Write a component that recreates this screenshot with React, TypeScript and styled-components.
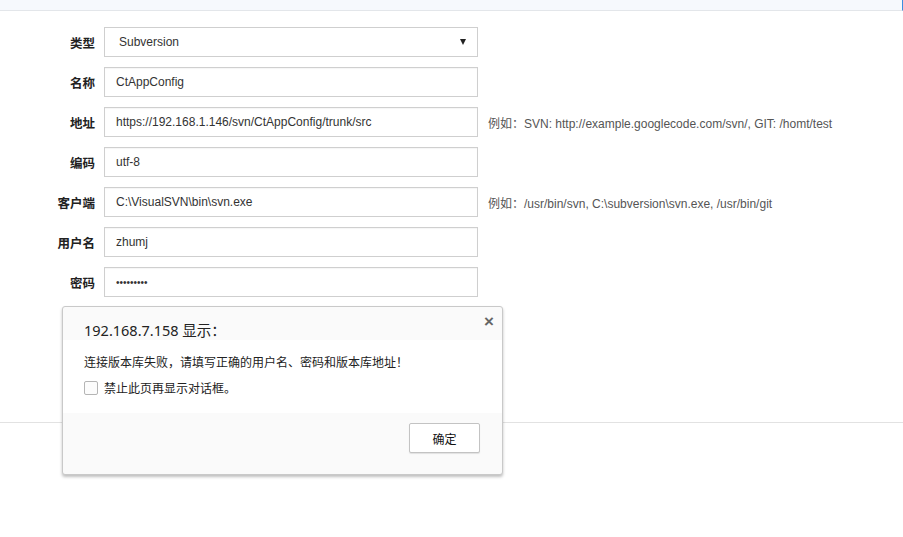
import styled, { createGlobalStyle } from 'styled-components'

const GlobalStyle = createGlobalStyle`
  html, body {
    margin: 0;
    padding: 0;
    background: #fff;
  }
  body {
    font-family: "Liberation Sans", Arial, "Noto Sans CJK SC", sans-serif;
    color: #333;
  }
`;

const Page = styled.div`
  position: relative;
  width: 903px;
  height: 537px;
  overflow: hidden;
`;

const TopBar = styled.div`
  height: 10px;
  background-color: #f6f9fd;
  border-bottom: 1px solid #e3e6ea;
  border-right: 1px solid #3d8ee0;
`;

const Form = styled.div`
  display: flex;
  flex-direction: column;
  gap: 10px;
  padding-top: 16px;
`;

const Row = styled.div`
  display: grid;
  grid-template-columns: 95px 374px auto;
  column-gap: 9px;
  align-items: center;
  height: 30px;
`;

const Label = styled.label`
  text-align: right;
  font-family: "Noto Sans CJK SC", sans-serif;
  font-weight: 700;
  font-size: 12.5px;
  color: #222;
`;

const Input = styled.input<{ $masked?: boolean }>`
  box-sizing: border-box;
  width: 374px;
  height: 30px;
  margin: 0;
  padding: 0 11px;
  border: 1px solid #cfcfcf;
  border-radius: 0;
  box-shadow: inset 0 1px 1px rgba(0, 0, 0, 0.04);
  font-family: "Liberation Sans", Arial, sans-serif;
  font-size: ${(p) => (p.$masked ? '10px' : '12px')};
  color: #333;
  outline: none;
  background: #fff;
`;

const Select = styled.div`
  box-sizing: border-box;
  display: flex;
  align-items: center;
  justify-content: space-between;
  width: 374px;
  height: 30px;
  padding: 0 11px 0 14px;
  border: 1px solid #cfcfcf;
  font-family: "Liberation Sans", Arial, sans-serif;
  font-size: 12px;
  color: #333;
  background: #fff;
`;

const Arrow = styled.span`
  width: 0;
  height: 0;
  border-left: 3px solid transparent;
  border-right: 3px solid transparent;
  border-top: 6px solid #222;
`;

const Hint = styled.span`
  padding-left: 1px;
  font-family: "Liberation Sans", Arial, "Noto Sans CJK SC", sans-serif;
  font-size: 12px;
  color: #555;
  white-space: nowrap;
`;

const HintPrefix = styled.span`
  font-family: "Noto Sans CJK SC", sans-serif;
  font-size: 12px;
`;

const Footer = styled.div`
  margin-top: 125px;
  border-top: 1px solid #e2e2e2;
`;

const Dialog = styled.div`
  position: absolute;
  left: 62px;
  top: 306px;
  width: 441px;
  height: 169px;
  box-sizing: border-box;
  display: flex;
  flex-direction: column;
  border: 1px solid #c9c9c9;
  border-radius: 3px;
  background: #fafafa;
  box-shadow: 0 2px 3px rgba(0, 0, 0, 0.25);
  font-family: "Noto Sans CJK SC", sans-serif;
  overflow: hidden;
`;

const DialogHeader = styled.div`
  position: relative;
  height: 33px;
  padding: 13px 0 0 21px;
  box-sizing: border-box;
  font-family: "Noto Sans", "Noto Sans CJK SC", sans-serif;
  font-size: 14.5px;
  color: #222;
  line-height: 20px;
`;

const CloseButton = styled.span`
  position: absolute;
  right: 8px;
  top: 5px;
  font-family: "Liberation Sans", Arial, sans-serif;
  font-size: 17px;
  font-weight: 700;
  color: #666;
`;

const DialogBody = styled.div`
  display: flex;
  flex-direction: column;
  gap: 9px;
  height: 73px;
  padding: 14px 0 0 21px;
  box-sizing: border-box;
  background: #fff;
`;

const Message = styled.div`
  font-size: 12px;
  color: #222;
  line-height: 16px;
`;

const CheckRow = styled.div`
  display: flex;
  align-items: center;
  gap: 6px;
  font-size: 12px;
  color: #222;
`;

const CheckBox = styled.span`
  width: 12px;
  height: 12px;
  border: 1px solid #b5b5b5;
  border-radius: 2px;
  background: #fcfcfc;
`;

const DialogFooter = styled.div`
  display: flex;
  justify-content: flex-end;
  padding: 10px 22px 0 0;
`;

const OkButton = styled.button`
  box-sizing: border-box;
  width: 71px;
  height: 30px;
  border: 1px solid #c3c3c3;
  border-radius: 2px;
  background: #fff;
  box-shadow: 0 1px 1px rgba(0, 0, 0, 0.1);
  font-family: "Noto Sans CJK SC", sans-serif;
  font-size: 12px;
  color: #111;
`;

const rows = [
  { label: '名称', value: 'CtAppConfig' },
  { label: '地址', value: 'https://192.168.1.146/svn/CtAppConfig/trunk/src', hint: 'SVN: http://example.googlecode.com/svn/, GIT: /homt/test' },
  { label: '编码', value: 'utf-8' },
  { label: '客户端', value: 'C:\\VisualSVN\\bin\\svn.exe', hint: '/usr/bin/svn, C:\\subversion\\svn.exe, /usr/bin/git' },
  { label: '用户名', value: 'zhumj' },
];

export default function App() {
  return (
    <Page>
      <GlobalStyle />
      <TopBar />
      <Form>
        <Row>
          <Label>类型</Label>
          <Select>
            <span>Subversion</span>
            <Arrow />
          </Select>
        </Row>
        {rows.map((r) => (
          <Row key={r.label}>
            <Label>{r.label}</Label>
            <Input readOnly value={r.value} />
            {r.hint && (
              <Hint>
                <HintPrefix>例如：</HintPrefix>
                {r.hint}
              </Hint>
            )}
          </Row>
        ))}
        <Row>
          <Label>密码</Label>
          <Input $masked readOnly value="•••••••••" />
        </Row>
      </Form>
      <Footer />
      <Dialog>
        <DialogHeader>
          192.168.7.158 显示：
          <CloseButton>×</CloseButton>
        </DialogHeader>
        <DialogBody>
          <Message>连接版本库失败，请填写正确的用户名、密码和版本库地址！</Message>
          <CheckRow>
            <CheckBox />
            禁止此页再显示对话框。
          </CheckRow>
        </DialogBody>
        <DialogFooter>
          <OkButton>确定</OkButton>
        </DialogFooter>
      </Dialog>
    </Page>
  )
}
